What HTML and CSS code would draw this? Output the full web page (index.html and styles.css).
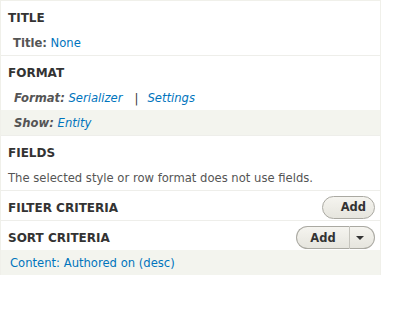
FILE: index.html
```html
<!DOCTYPE html>
<html lang="en">
<head>
<meta charset="UTF-8">
<title>View display</title>
<link rel="stylesheet" href="styles.css">
</head>
<body>
  <div class="panel">
    <div class="section">
      <div class="section-head"><h3>Title</h3></div>
      <div class="row row-indent"><span class="label">Title:</span> <a href="#">None</a></div>
    </div>

    <div class="section">
      <div class="section-head"><h3>Format</h3></div>
      <div class="row row-italic"><span class="label">Format:</span> <a href="#">Serializer</a><span class="sep">|</span><a href="#">Settings</a></div>
      <div class="row row-italic row-shaded"><span class="label">Show:</span> <a href="#">Entity</a></div>
    </div>

    <div class="section">
      <div class="section-head"><h3>Fields</h3></div>
      <div class="row">The selected style or row format does not use fields.</div>
    </div>

    <div class="section">
      <div class="section-head">
        <h3>Filter criteria</h3>
        <button class="btn">Add</button>
      </div>
    </div>

    <div class="section">
      <div class="section-head">
        <h3>Sort criteria</h3>
        <div class="dropbutton">
          <button class="drop-main">Add</button>
          <button class="drop-toggle"><span class="caret"></span></button>
        </div>
      </div>
      <div class="row row-shaded row-link"><a href="#">Content: Authored on (desc)</a></div>
    </div>
  </div>
</body>
</html>
```

FILE: styles.css
```css
body {
  margin: 0;
  font-family: "DejaVu Sans", sans-serif;
  font-size: 11.6px;
  color: #333;
  background: #fff;
}

a {
  color: #0074bd;
  text-decoration: none;
}

.panel {
  width: 379px;
  border: 1px solid #f0f0ea;
  border-bottom: none;
}

.section {
  border-bottom: 1px solid #eeeeea;
}

.section:last-child {
  border-bottom: none;
}

.section-head {
  display: flex;
  align-items: center;
  justify-content: space-between;
  min-height: 25px;
  padding: 4px 5px 0 7px;
}

.section-head h3 {
  margin: 0;
  font-size: 12px;
  font-weight: bold;
  text-transform: uppercase;
  color: #333;
}

.row {
  height: 25px;
  line-height: 26px;
  padding: 0 7px;
  color: #555;
}

.row-indent {
  padding-left: 12px;
}

.row-italic {
  padding-left: 13px;
  font-style: italic;
}

.label {
  font-weight: bold;
  color: #555;
}

.sep {
  margin: 0 9px 0 12px;
  color: #333;
}

.row-shaded {
  background-color: #f3f4ee;
}

.row-link {
  padding-left: 9px;
}

.btn,
.drop-main,
.drop-toggle {
  font-family: inherit;
  font-size: 11.5px;
  font-weight: bold;
  color: #333;
  height: 23px;
  background: linear-gradient(#f5f4ef, #e6e5de);
  border: 1px solid #aaa9a2;
  cursor: pointer;
}

.btn {
  width: 53px;
  padding: 0 8px 0 0;
  text-align: right;
  border-radius: 12px;
  margin-top: -1px;
}

.dropbutton {
  display: flex;
}

.drop-main {
  width: 53px;
  padding: 0;
  border-radius: 12px 0 0 12px;
  border-right: none;
}

.drop-toggle {
  width: 26px;
  padding: 0 4px 0 0;
  border-radius: 0 12px 12px 0;
  border-left: 1px solid #c5c4bd;
  display: flex;
  align-items: center;
  justify-content: center;
}

.caret {
  width: 0;
  height: 0;
  border-left: 4px solid transparent;
  border-right: 4px solid transparent;
  border-top: 4px solid #333;
}
```
